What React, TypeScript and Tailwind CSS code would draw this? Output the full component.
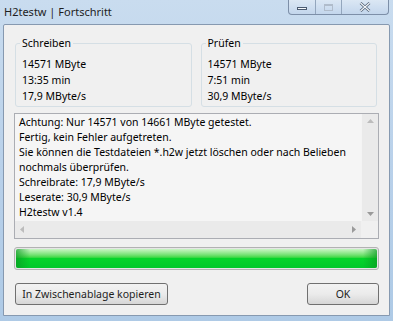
import React from 'react';

const font = { fontFamily: '"Noto Sans", "Segoe UI", sans-serif' };

function GroupBox({ title, lines }: { title: string; lines: string[] }) {
  return (
    <div className="relative flex-1 border border-[#d5dfe5] rounded-[3px] h-[64px] pt-[12px] pl-[6px]">
      <span className="absolute -top-[9px] left-[4px] bg-[#f0f0f0] px-[2px] leading-[16px]">{title}</span>
      {lines.map((l) => (
        <div key={l} className="leading-[16px]">{l}</div>
      ))}
    </div>
  );
}

export default function App() {
  const logLines = [
    'Achtung: Nur 14571 von 14661 MByte getestet.',
    'Fertig, kein Fehler aufgetreten.',
    'Sie können die Testdateien *.h2w jetzt löschen oder nach Belieben',
    'nochmals überprüfen.',
    'Schreibrate: 17,9 MByte/s',
    'Leserate: 30,9 MByte/s',
    'H2testw v1.4',
  ];

  return (
    <div
      className="w-[393px] h-[321px] flex flex-col text-[10.5px] text-black bg-gradient-to-b from-[#c9dcef] via-[#b9d1ea] to-[#aecae6] overflow-hidden"
      style={font}
    >
      {/* Title bar */}
      <div className="h-[24px] flex items-start justify-between pl-[4px]">
        <span className="mt-[4px] leading-[16px] text-[11px] text-[#1e1e1e]">H2testw | Fortschritt</span>
        <div className="flex h-[15px] mr-[4px] border border-t-0 border-[#7d8fa8] rounded-b-[4px] overflow-hidden bg-gradient-to-b from-[#dbe7f4] to-[#c3d6ec]">
          <div className="w-[27px] flex items-center justify-center border-r border-[#93a6bd]">
            <div className="w-[10px] h-[3px] bg-[#f5f8fb] border border-[#4a5a70] mt-[3px]" />
          </div>
          <div className="w-[26px] flex items-center justify-center border-r border-[#93a6bd]">
            <div className="w-[9px] h-[7px] border border-[#b0bccb] border-t-2" />
          </div>
          <div className="w-[46px] flex items-center justify-center">
            <svg width="12" height="10" viewBox="0 0 12 10">
              <path d="M1.5 1 L10.5 9 M10.5 1 L1.5 9" stroke="#4a5a70" strokeWidth="2.6" />
              <path d="M1.5 1 L10.5 9 M10.5 1 L1.5 9" stroke="#f4f7fa" strokeWidth="1.2" />
            </svg>
          </div>
        </div>
      </div>

      {/* Client area */}
      <div className="mx-[3px] mb-[5px] flex-1 border border-[#8699b0] rounded-t-[2px] bg-[#f0f0f0] px-[10px] flex flex-col">
        <div className="flex gap-[9px] mt-[18px] pl-[1px] pr-[2px]">
          <GroupBox title="Schreiben" lines={['14571 MByte', '13:35 min', '17,9 MByte/s']} />
          <GroupBox title="Prüfen" lines={['14571 MByte', '7:51 min', '30,9 MByte/s']} />
        </div>

        {/* Log text */}
        <div className="mt-[6px] h-[126px] border border-[#abadb3] bg-white flex flex-col">
          <div className="flex flex-1 min-h-0">
            <div className="flex-1 bg-[#f5f5f5] pl-[4px] pt-[1px] whitespace-nowrap overflow-hidden">
              {logLines.map((l) => (
                <div key={l} className="leading-[15px]">{l}</div>
              ))}
            </div>
            <div className="w-[17px] bg-[#eaeaea] border-l border-[#f4f4f4] flex flex-col justify-between items-center py-[5px]">
              <svg width="7" height="4" viewBox="0 0 7 4"><path d="M0 4 L3.5 0 L7 4 Z" fill="#bcbcbc" /></svg>
              <svg width="7" height="4" viewBox="0 0 7 4"><path d="M0 0 L3.5 4 L7 0 Z" fill="#9a9a9a" /></svg>
            </div>
          </div>
          <div className="flex h-[17px]">
            <div className="flex-1 bg-[#eaeaea] flex items-center justify-between px-[5px]">
              <svg width="4" height="7" viewBox="0 0 4 7"><path d="M4 0 L0 3.5 L4 7 Z" fill="#bcbcbc" /></svg>
              <svg width="4" height="7" viewBox="0 0 4 7"><path d="M0 0 L4 3.5 L0 7 Z" fill="#9a9a9a" /></svg>
            </div>
            <div className="w-[17px] bg-[#f0f0f0]" />
          </div>
        </div>

        {/* Progress bar */}
        <div className="mt-[8px] h-[23px] rounded-[3px] border border-[#b2b2b2] p-[1px] bg-[#e6e6e6]">
          <div className="h-full rounded-[2px] bg-gradient-to-b from-[#c9f5c4] via-[#06d42a] to-[#01c82a] relative overflow-hidden">
            <div className="absolute inset-y-0 left-0 w-[14px] bg-gradient-to-r from-[#0a9a22]/70 to-transparent" />
            <div className="absolute inset-y-0 right-0 w-[14px] bg-gradient-to-l from-[#0a9a22]/70 to-transparent" />
          </div>
        </div>

        {/* Buttons */}
        <div className="mt-[13px] flex justify-between pl-[1px]">
          <button className="h-[22px] w-[153px] whitespace-nowrap rounded-[3px] border border-[#707070] bg-gradient-to-b from-[#f2f2f2] via-[#ebebeb] to-[#d6d6d6] leading-[20px] text-[#1e1e1e]">
            In Zwischenablage kopieren
          </button>
          <button className="h-[22px] w-[72px] rounded-[3px] border border-[#707070] bg-gradient-to-b from-[#f2f2f2] via-[#ebebeb] to-[#d6d6d6] leading-[20px] text-[#1e1e1e]">
            OK
          </button>
        </div>
      </div>
    </div>
  );
}
